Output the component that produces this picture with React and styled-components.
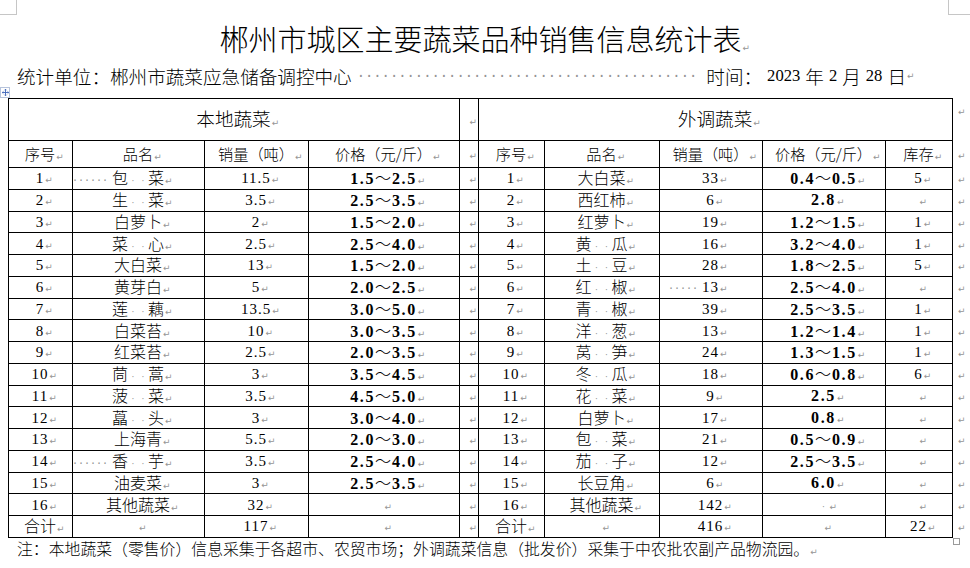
import React from 'react'
import styled, { createGlobalStyle } from 'styled-components'

const GlobalStyle = createGlobalStyle`
  html, body { margin: 0; padding: 0; background: #fff; }
  body {
    font-family: "Liberation Serif", "Noto Sans CJK SC", serif;
    color: #000;
  }
`

const CJK = `"Noto Sans CJK SC", "Liberation Sans", sans-serif`
const NUM = `"Liberation Serif", "Noto Sans CJK SC", serif`
const MARK_GRAY = '#959595'

const Page = styled.div`
  position: relative;
  width: 970px;
  height: 568px;
  overflow: hidden;
  background: #fff;
`

const CornerMark = styled.div`
  position: absolute;
  top: 0;
  height: 14px;
  border-bottom: 1px solid #c6c6c6;
  ${p => p.$side === 'left'
    ? 'left: 0; width: 16px; border-right: 1px solid #c6c6c6;'
    : 'left: 948px; width: 22px; border-left: 1px solid #c6c6c6;'}
`

const MoveHandle = styled.div`
  position: absolute;
  left: 0;
  top: 87px;
  width: 8px;
  height: 9px;
  border: 1px solid #b7c4dc;
  background: #fff;
  display: flex;
  align-items: center;
  justify-content: center;
`

const ResizeHandle = styled.div`
  position: absolute;
  left: 953px;
  top: 538px;
  width: 5px;
  height: 5px;
  border: 1px solid #9a9a9a;
  background: #fff;
`

const Title = styled.h1`
  margin: 0;
  padding-top: 20px;
  height: 36px;
  font-family: ${CJK};
  font-weight: 300;
  font-size: 29px;
  line-height: 36px;
  text-align: center;
  width: 962px;
  overflow: visible;
`

const Subtitle = styled.div`
  margin-top: 8px;
  margin-left: 17px;
  height: 24px;
  display: flex;
  align-items: center;
  font-family: ${CJK};
  font-weight: 300;
  font-size: 18.6px;
  line-height: 24px;
  white-space: nowrap;
`

const Leader = styled.span`
  margin: 0 9px 0 5px;
  font-family: "DejaVu Sans Mono", monospace;
  font-size: 13.8px;
  line-height: 24px;
  color: ${MARK_GRAY};
  white-space: nowrap;
`

const Word = styled.span``

const DateNum = styled.span`
  font-family: ${NUM};
  font-size: 16.6px;
  margin: 0 5px;
`

const Sheet = styled.table`
  margin-top: 10px;
  margin-left: 8px;
  border-collapse: collapse;
  table-layout: fixed;
  width: 962px;
`

const Row = styled.tr`
  height: ${p => p.$h}px;
`

const kinds = {
  head: `font-family: ${CJK}; font-weight: 300; font-size: 18.6px;`,
  sub: `font-family: ${CJK}; font-weight: 300; font-size: 15.2px;`,
  name: `font-family: ${CJK}; font-weight: 300; font-size: 16px;`,
  num: `font-family: ${NUM}; font-size: 15px; letter-spacing: 1px;`,
  price: `font-family: ${NUM}; font-weight: bold; font-size: 16px; letter-spacing: 1.6px;`,
}

const Cell = styled.td`
  border: 1px solid #000;
  padding: 0;
  text-align: center;
  vertical-align: middle;
  white-space: nowrap;
  overflow: visible;
  line-height: 14px;
  ${p => kinds[p.$kind || 'num']}
`

const EndCell = styled.td`
  border: none;
  padding: ${p => (p.$top ? '4px 0 0 4px' : '0 0 0 4px')};
  text-align: left;
  vertical-align: ${p => (p.$top ? 'top' : 'middle')};
  line-height: 14px;
`

const MarkBox = styled.span`
  display: inline-block;
  width: ${p => (p.$flow ? '9px' : '0')};
  overflow: visible;
  white-space: nowrap;
  letter-spacing: 0;
  font-family: "DejaVu Sans", sans-serif;
  font-weight: normal;
  font-size: 9px;
  line-height: 9px;
  color: ${MARK_GRAY};
  padding-left: 1px;
`

const SpaceDot = styled.span`
  display: inline-block;
  width: ${p => p.$w || 10}px;
  text-align: center;
  font-family: "DejaVu Sans", sans-serif;
  font-weight: normal;
  letter-spacing: 0;
  font-size: 9px;
  line-height: 9px;
  color: ${MARK_GRAY};
`

const Tilde = styled.span`
  font-family: ${CJK};
  font-weight: 300;
  letter-spacing: 1px;
`

const Hang = styled.span`
  display: inline-block;
  width: ${p => p.$n * 6}px;
  margin-left: -${p => p.$n * 6 + 4}px;
  margin-right: 4px;
  text-align: right;
  font-family: "DejaVu Sans Mono", monospace;
  font-weight: normal;
  letter-spacing: 0;
  font-size: 10px;
  line-height: 10px;
  color: ${MARK_GRAY};
`

const Note = styled.div`
  margin-left: 17px;
  font-family: ${CJK};
  font-weight: 300;
  font-size: 15.85px;
  line-height: 22px;
  white-space: nowrap;
`

const Mark = ({ flow }) => <MarkBox $flow={flow}>↵</MarkBox>

const Text = ({ value, lead }) => (
  <>
    {lead ? <Hang $n={lead}>{'·'.repeat(lead)}</Hang> : null}
    {String(value)
      .split('')
      .map((ch, i) => {
        if (ch === ' ') return <SpaceDot key={i}>·</SpaceDot>
        if (ch === '～') return <Tilde key={i}>～</Tilde>
        return <React.Fragment key={i}>{ch}</React.Fragment>
      })}
    <Mark />
  </>
)

const local = [
  ['1', '包  菜', 6, '11.5', '1.5～2.5'],
  ['2', '生  菜', 0, '3.5', '2.5～3.5'],
  ['3', '白萝卜', 0, '2', '1.5～2.0'],
  ['4', '菜  心', 0, '2.5', '2.5～4.0'],
  ['5', '大白菜', 0, '13', '1.5～2.0'],
  ['6', '黄芽白', 0, '5', '2.0～2.5'],
  ['7', '莲  藕', 0, '13.5', '3.0～5.0'],
  ['8', '白菜苔', 0, '10', '3.0～3.5'],
  ['9', '红菜苔', 0, '2.5', '2.0～3.5'],
  ['10', '茼  蒿', 0, '3', '3.5～4.5'],
  ['11', '菠  菜', 0, '3.5', '4.5～5.0'],
  ['12', '藠  头', 0, '3', '3.0～4.0'],
  ['13', '上海青', 0, '5.5', '2.0～3.0'],
  ['14', '香  芋', 6, '3.5', '2.5～4.0'],
  ['15', '油麦菜', 0, '3', '2.5～3.5'],
  ['16', '其他蔬菜', 0, '32', ''],
]

const imported = [
  ['1', '大白菜', '33', 0, '0.4～0.5', '5'],
  ['2', '西红柿', '6', 0, '2.8', ''],
  ['3', '红萝卜', '19', 0, '1.2～1.5', '1'],
  ['4', '黄  瓜', '16', 0, '3.2～4.0', '1'],
  ['5', '土  豆', '28', 0, '1.8～2.5', '5'],
  ['6', '红  椒', '13', 5, '2.5～4.0', ''],
  ['7', '青  椒', '39', 0, '2.5～3.5', '1'],
  ['8', '洋  葱', '13', 0, '1.2～1.4', '1'],
  ['9', '莴  笋', '24', 0, '1.3～1.5', '1'],
  ['10', '冬  瓜', '18', 0, '0.6～0.8', '6'],
  ['11', '花  菜', '9', 0, '2.5', ''],
  ['12', '白萝卜', '17', 0, '0.8', ''],
  ['13', '包  菜', '21', 0, '0.5～0.9', ''],
  ['14', '茄  子', '12', 0, '2.5～3.5', ''],
  ['15', '长豆角', '6', 0, '6.0', ''],
  ['16', '其他蔬菜', '142', 0, ' ', ''],
]

const widths = [64, 132, 104, 151, 19, 66, 115, 103, 123, 67, 18]
const ROW_H = 21.76

const MoveIcon = () => (
  <svg width="7" height="7" viewBox="0 0 7 7">
    <path d="M3.5 0.2v6.6M0.2 3.5h6.6" stroke="#3c63b8" strokeWidth="0.9" />
    <path d="M2.4 1.3L3.5 0.2L4.6 1.3M2.4 5.7L3.5 6.8L4.6 5.7M1.3 2.4L0.2 3.5L1.3 4.6M5.7 2.4L6.8 3.5L5.7 4.6" stroke="#3c63b8" strokeWidth="0.8" fill="none" />
  </svg>
)

const App = () => {
  return (
    <Page>
      <GlobalStyle />
      <CornerMark $side="left" />
      <CornerMark $side="right" />
      <MoveHandle><MoveIcon /></MoveHandle>

      <Title>郴州市城区主要蔬菜品种销售信息统计表<Mark /></Title>

      <Subtitle>
        <Word>统计单位：郴州市蔬菜应急储备调控中心</Word>
        <Leader>{'·'.repeat(41)}</Leader>
        <Word>时间：</Word>
        <DateNum>2023</DateNum>
        <Word>年</Word>
        <DateNum>2</DateNum>
        <Word>月</Word>
        <DateNum>28</DateNum>
        <Word>日</Word>
        <Mark flow />
      </Subtitle>

      <Sheet>
        <colgroup>
          {widths.map((w, i) => <col key={i} style={{ width: w }} />)}
        </colgroup>
        <tbody>
          <Row $h={42}>
            <Cell colSpan={4} $kind="head"><Text value="本地蔬菜" /></Cell>
            <Cell><Mark /></Cell>
            <Cell colSpan={5} $kind="head"><Text value="外调蔬菜" /></Cell>
            <EndCell $top><Mark /></EndCell>
          </Row>
          <Row $h={27}>
            <Cell $kind="sub"><Text value="序号" /></Cell>
            <Cell $kind="sub"><Text value="品名" /></Cell>
            <Cell $kind="sub"><Text value="销量（吨）" /></Cell>
            <Cell $kind="sub"><Text value="价格（元/斤）" /></Cell>
            <Cell><Mark /></Cell>
            <Cell $kind="sub"><Text value="序号" /></Cell>
            <Cell $kind="sub"><Text value="品名" /></Cell>
            <Cell $kind="sub"><Text value="销量（吨）" /></Cell>
            <Cell $kind="sub"><Text value="价格（元/斤）" /></Cell>
            <Cell $kind="sub"><Text value="库存" /></Cell>
            <EndCell><Mark /></EndCell>
          </Row>
          {local.map((l, i) => {
            const r = imported[i]
            return (
              <Row key={i} $h={ROW_H}>
                <Cell><Text value={l[0]} /></Cell>
                <Cell $kind="name"><Text value={l[1]} lead={l[2]} /></Cell>
                <Cell><Text value={l[3]} /></Cell>
                <Cell $kind="price"><Text value={l[4]} /></Cell>
                <Cell><Mark /></Cell>
                <Cell><Text value={r[0]} /></Cell>
                <Cell $kind="name"><Text value={r[1]} /></Cell>
                <Cell><Text value={r[2]} lead={r[3]} /></Cell>
                <Cell $kind="price"><Text value={r[4]} /></Cell>
                <Cell><Text value={r[5]} /></Cell>
                <EndCell><Mark /></EndCell>
              </Row>
            )
          })}
          <Row $h={ROW_H}>
            <Cell $kind="name"><Text value="合计" /></Cell>
            <Cell><Mark /></Cell>
            <Cell><Text value="117" /></Cell>
            <Cell><Mark /></Cell>
            <Cell><Mark /></Cell>
            <Cell $kind="name"><Text value="合计" /></Cell>
            <Cell><Mark /></Cell>
            <Cell><Text value="416" /></Cell>
            <Cell><Mark /></Cell>
            <Cell><Text value="22" /></Cell>
            <EndCell><Mark /></EndCell>
          </Row>
        </tbody>
      </Sheet>

      <Note>
        注：本地蔬菜（零售价）信息采集于各超市、农贸市场；外调蔬菜信息（批发价）采集于中农批农副产品物流园。<Mark />
      </Note>
      <ResizeHandle />
    </Page>
  )
}

export default App
